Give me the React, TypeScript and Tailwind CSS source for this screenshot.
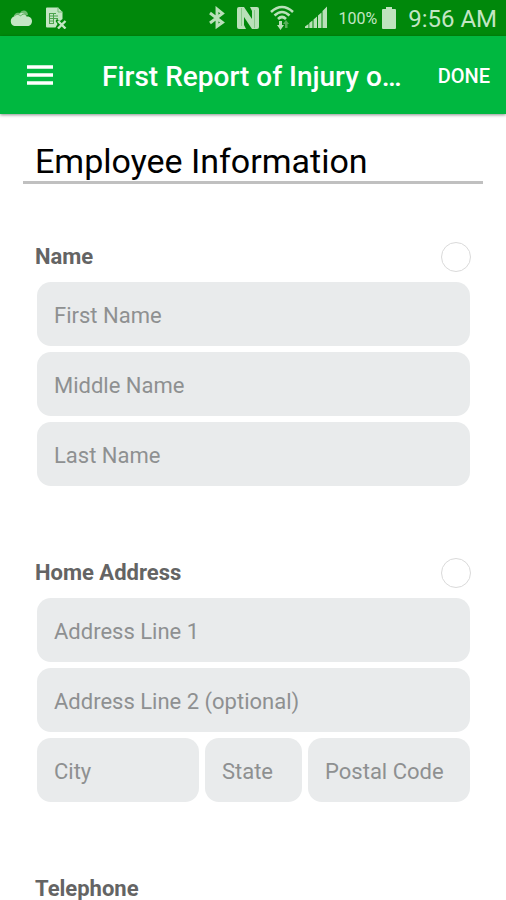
import { useState } from "react";

type FieldProps = { label: string; id: string };

function Field({ label, id }: FieldProps) {
  return (
    <input
      id={id}
      name={id}
      type="text"
      aria-label={label}
      placeholder={label}
      className="h-16 w-full min-w-0 rounded-[14px] bg-[#e9ebec] px-[17px] pt-[2px] text-[22px] text-[#444] outline-none placeholder:text-[#8e9091]"
    />
  );
}

function SectionHeader({ title, id, toggle = true }: { title: string; id: string; toggle?: boolean }) {
  const [done, setDone] = useState(false);
  return (
    <div className="flex h-[30px] items-center justify-between">
      <h2 className="text-[22px] font-bold leading-[30px] text-[#646464]">
        <label htmlFor={toggle ? id : undefined}>{title}</label>
      </h2>
      {toggle && (
        <input
          id={id}
          type="checkbox"
          checked={done}
          onChange={(e) => setDone(e.target.checked)}
          className="size-[30px] appearance-none rounded-full border border-[#dadada] bg-white checked:bg-[#00b940]"
        />
      )}
    </div>
  );
}

function CloudIcon() {
  return (
    <svg viewBox="0 0 24 18" className="h-[18px] w-6" aria-hidden="true">
      <path d="M5 9C4 5 8 3 11 4C13 0 19 1 19 6" fill="#6fbb70" />
      <path d="M5.500 17A5 5 0 0 1 5 7.500C6 5.500 8 5 9.500 5.500C12 2.500 17 4 17.500 7.500C21 7 23 9.500 23 12C23 15 21 17 18.500 17Z" fill="#c4e6c4" />
      <path d="M5.500 7C8 4.500 10 5.500 11.500 7C13 5 15 4.500 17 6" fill="none" stroke="#4aa64b" strokeWidth="0.8" />
    </svg>
  );
}

function DocumentIcon() {
  return (
    <svg viewBox="0 0 22 22" className="size-[22px]" aria-hidden="true">
      <path d="M2 0.500H13L17.500 5V12L15 14L12 12L10.500 14L12.500 17L10.500 20.500H2Q1 20.500 1 19.500V1.500Q1 0.500 2 0.500Z" fill="#c4e6c4" />
      <path d="M13 0.500V5H17.500" fill="none" stroke="#76bd77" />
      <path d="M4 6.500H11M4 9H13M4 11.500H13M4 14H9M4 16.500H9M4.500 6V17M8.500 6V17" stroke="#4da44e" strokeWidth="1" />
      <path d="M13 14L20.500 21.500M20.500 14L13 21.500" stroke="#c4e6c4" strokeWidth="2.400" />
    </svg>
  );
}

function BluetoothIcon() {
  return (
    <svg viewBox="0 0 18 24" className="h-6 w-[18px]" aria-hidden="true">
      <path d="M2 7L14.500 16.500L9 20.500V3L14.500 7.500L2 17" fill="none" stroke="#b9e0b9" strokeWidth="2.900" />
    </svg>
  );
}

function NfcIcon() {
  return (
    <svg viewBox="0 0 24 24" className="size-6" aria-hidden="true">
      <path d="M3 1H8L16 13V5L14 1H21Q23 1 23 3V21Q23 23 21 23H16L8 11V19L10 23H3Q1 23 1 21V3Q1 1 3 1Z" fill="#b9e0b9" />
      <path d="M5.500 2V20M18.500 4V22" stroke="#7cc07d" strokeWidth="0.800" />
    </svg>
  );
}

function WifiIcon() {
  return (
    <svg viewBox="0 0 24 26" className="h-[26px] w-6" aria-hidden="true">
      <path d="M1 7Q12 -3 23 7M4.500 10.500Q12 3.500 19.500 10.500M8 14Q12 10 16 14" fill="none" stroke="#b9e0b9" strokeWidth="2.600" />
      <path d="M9 16H12V20H14L10.500 25L7 20H9Z" fill="#b9e0b9" />
      <path d="M15 23V19H13L16 15L19 19H17.500V23Z" fill="#5aae5b" />
    </svg>
  );
}

function SignalIcon() {
  return (
    <svg viewBox="0 0 24 24" className="size-6" aria-hidden="true">
      <path d="M1 22V20.500L4.500 18V22ZM5.300 22V17L8.500 14.500V22ZM9.500 22V13.500L13 10.500V22ZM14 22V9.500L17.500 6.500V22ZM18.500 22V5L23 0.500V22Z" fill="#b9e0b9" />
    </svg>
  );
}

function BatteryIcon() {
  return (
    <svg viewBox="0 0 14 22" className="h-[22px] w-[14px]" aria-hidden="true">
      <path d="M4 0H10V2H13Q14 2 14 3V21Q14 22 13 22H1Q0 22 0 21V3Q0 2 1 2H4Z" fill="#bfe3bf" />
    </svg>
  );
}

function StatusBar() {
  return (
    <div className="flex h-9 shrink-0 items-center justify-between bg-[#00880b] px-[9px] text-[#c3e6c4]">
      <div className="flex items-center gap-3">
        <CloudIcon />
        <DocumentIcon />
      </div>
      <div className="flex items-center gap-[5px]">
        <div className="flex items-center gap-[10px]">
          <BluetoothIcon />
          <NfcIcon />
          <WifiIcon />
          <SignalIcon />
          <span className="pt-[2px] text-[16px] leading-6">100%</span>
        </div>
        <div className="flex items-center gap-3">
          <BatteryIcon />
          <span className="pt-[2px] text-[24px] leading-7">9:56 AM</span>
        </div>
      </div>
    </div>
  );
}

export default function App() {
  return (
    <div className="flex h-screen flex-col bg-white font-[Roboto,sans-serif]">
      <StatusBar />
      <header className="z-10 flex h-[78px] shrink-0 items-center bg-[#00b840] px-4 text-white shadow-[0_1px_3px_rgba(0,0,0,0.45)]">
        <button type="button" aria-label="Menu" className="flex size-12 items-center justify-center">
          <svg viewBox="0 0 28 20" className="h-5 w-7" aria-hidden="true">
            <path d="M1 2H27M1 10H27M1 18H27" stroke="currentColor" strokeWidth="3.600" />
          </svg>
        </button>
        <h1 className="min-w-0 flex-1 truncate pl-[38px] pt-1 text-[28px] font-medium leading-9">First Report of Injury o…</h1>
        <button type="button" className="pt-[2px] text-[20px] font-medium leading-9">DONE</button>
      </header>
      <main className="flex-1 overflow-y-auto px-[23px] pt-7 [scrollbar-width:none]">
        <h2 className="border-b-[3px] border-[#c0c0c0] pl-3 text-[34px] leading-[39px] text-black">Employee Information</h2>
        <form className="flex flex-col gap-[72px] px-3 pt-[58px]">
          <section>
            <SectionHeader title="Name" id="name-complete" />
            <div className="flex flex-col gap-[6px] pl-[2px] pr-px pt-[10px]">
              <Field id="first-name" label="First Name" />
              <Field id="middle-name" label="Middle Name" />
              <Field id="last-name" label="Last Name" />
            </div>
          </section>
          <section>
            <SectionHeader title="Home Address" id="address-complete" />
            <div className="flex flex-col gap-[6px] pl-[2px] pr-px pt-[10px]">
              <Field id="address-1" label="Address Line 1" />
              <Field id="address-2" label="Address Line 2 (optional)" />
              <div className="grid grid-cols-[5fr_3fr_5fr] gap-[6px]">
                <Field id="city" label="City" />
                <Field id="state" label="State" />
                <Field id="postal-code" label="Postal Code" />
              </div>
            </div>
          </section>
          <section>
            <SectionHeader title="Telephone" id="telephone" toggle={false} />
          </section>
        </form>
      </main>
    </div>
  );
}
